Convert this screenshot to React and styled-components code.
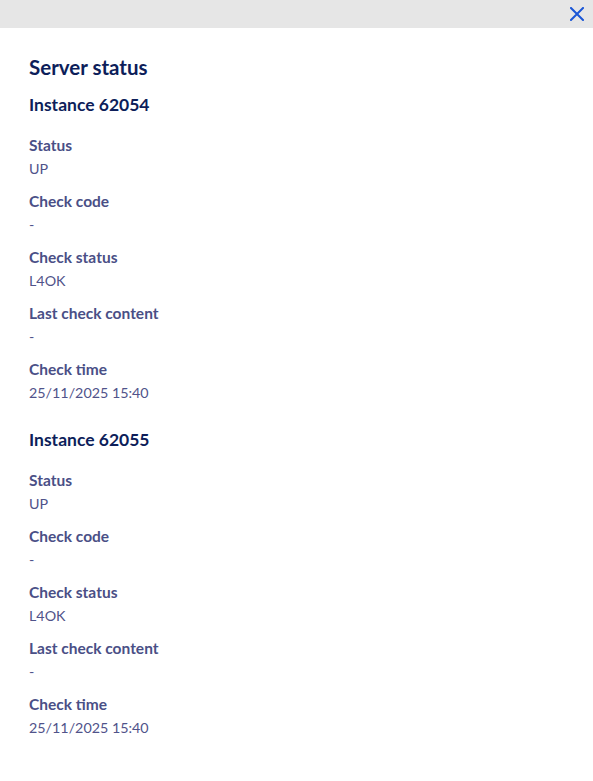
import React from 'react'
import styled, { createGlobalStyle } from 'styled-components'

const Global = createGlobalStyle`
  html, body { margin: 0; padding: 0; background: #ffffff; }
  body { font-family: "Lato", "Open Sans", sans-serif; }
`;

const Panel = styled.div`
  width: 593px;
  min-height: 781px;
  background: #ffffff;
`;

const TopBar = styled.div`
  height: 28px;
  background: #e6e6e6;
  display: flex;
  justify-content: flex-end;
  align-items: center;
  padding-right: 8px;
`;

const CloseButton = styled.button`
  border: none;
  background: transparent;
  padding: 0;
  width: 16px;
  height: 16px;
  display: flex;
  align-items: center;
  justify-content: center;
  cursor: pointer;
`;

const Body = styled.div`
  padding: 27px 29px 20px;
  display: flex;
  flex-direction: column;
`;

const Title = styled.h1`
  margin: 0 0 15px;
  font-size: 20.5px;
  line-height: 24px;
  font-weight: 700;
  color: #0d1e5a;
`;

const Section = styled.section`
  display: flex;
  flex-direction: column;
  gap: 12px;
  margin-bottom: 26px;
`;

const InstanceTitle = styled.h2`
  margin: 0 0 7px;
  font-size: 17.5px;
  line-height: 22px;
  font-weight: 700;
  color: #0d1e5a;
`;

const Field = styled.div`
  display: flex;
  flex-direction: column;
  gap: 4px;
`;

const Label = styled.div`
  font-size: 15.5px;
  line-height: 20px;
  font-weight: 700;
  color: #4a4f86;
`;

const Value = styled.div`
  font-size: 14.3px;
  line-height: 20px;
  font-weight: 400;
  color: #50538a;
`;

const instances = [
  { id: '62054', status: 'UP', code: '-', checkStatus: 'L4OK', content: '-', time: '25/11/2025 15:40' },
  { id: '62055', status: 'UP', code: '-', checkStatus: 'L4OK', content: '-', time: '25/11/2025 15:40' },
];

export default function App() {
  return (
    <Panel>
      <Global />
      <TopBar>
        <CloseButton aria-label="Close">
          <svg width="14" height="14" viewBox="0 0 14 14">
            <path d="M1 1L13 13M13 1L1 13" stroke="#1a56d6" strokeWidth="2" strokeLinecap="square" />
          </svg>
        </CloseButton>
      </TopBar>
      <Body>
        <Title>Server status</Title>
        {instances.map((inst) => (
          <Section key={inst.id}>
            <InstanceTitle>Instance {inst.id}</InstanceTitle>
            <Field>
              <Label>Status</Label>
              <Value>{inst.status}</Value>
            </Field>
            <Field>
              <Label>Check code</Label>
              <Value>{inst.code}</Value>
            </Field>
            <Field>
              <Label>Check status</Label>
              <Value>{inst.checkStatus}</Value>
            </Field>
            <Field>
              <Label>Last check content</Label>
              <Value>{inst.content}</Value>
            </Field>
            <Field>
              <Label>Check time</Label>
              <Value>{inst.time}</Value>
            </Field>
          </Section>
        ))}
      </Body>
    </Panel>
  )
}
